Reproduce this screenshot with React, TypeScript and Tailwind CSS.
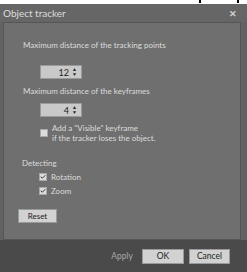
import { Check } from 'lucide-react';

function Spin({ value }: { value: string }) {
  return (
    <div className="ml-[36px] flex h-[14px] w-[42px] items-center justify-end border border-[#9a9a9a] bg-[#c9c9c9] pr-[4px] text-[#222]">
      <span className="text-[9px] leading-none">{value}</span>
      <span className="ml-[3px] flex flex-col items-center text-[5px] leading-[5px]">
        <span>▲</span>
        <span>▼</span>
      </span>
    </div>
  );
}

function Box({ checked }: { checked?: boolean }) {
  return (
    <span className="flex h-[8px] w-[8px] shrink-0 items-center justify-center border border-[#a8a8a8] bg-[#dcdcdc]">
      {checked && <Check className="h-[8px] w-[8px] text-[#333]" strokeWidth={4} />}
    </span>
  );
}

export default function App() {
  return (
    <div
      className="flex h-[272px] w-[247px] flex-col bg-[#626262] text-[#dcdcdc]"
      style={{ fontFamily: 'Lato, "Open Sans", sans-serif' }}
    >
      {/* strip left over from the window above */}
      <div className="flex h-[4px] bg-white">
        <span className="ml-[199px] h-[3px] w-[2px] bg-black" />
        <span className="ml-[36px] h-[3px] w-[2px] bg-black" />
      </div>

      {/* title bar */}
      <div className="flex h-[18px] items-center justify-between bg-[#666] pl-[3px] pr-[10px]">
        <span className="text-[10px] leading-none">Object tracker</span>
        <span className="text-[9px] font-bold leading-none text-[#d0d0d0]">✕</span>
      </div>

      {/* settings panel */}
      <div className="ml-[3px] mr-[6px] flex h-[218px] flex-col border border-[#555] bg-[#6f6f6f] text-[8px]">
        <div className="ml-[19px] mt-[16px] h-[12px] leading-[12px]">Maximum distance of the tracking points</div>
        <div className="mt-[14px]">
          <Spin value="12" />
        </div>

        <div className="ml-[19px] mt-[6px] h-[12px] leading-[12px]">Maximum distance of the keyframes</div>
        <div className="mt-[6px]">
          <Spin value="4" />
        </div>

        <div className="ml-[36px] mt-[6px] flex items-center gap-[4px]">
          <Box />
          <div className="leading-[10px]">
            <div>Add a "Visible" keyframe</div>
            <div>if the tracker loses the object.</div>
          </div>
        </div>

        <div className="ml-[18px] mt-[14px] h-[12px] leading-[12px]">Detecting</div>
        <div className="ml-[35px] mt-[2px] flex h-[12px] items-center gap-[4px]">
          <Box checked />
          <span>Rotation</span>
        </div>
        <div className="ml-[35px] mt-[2px] flex h-[12px] items-center gap-[4px]">
          <Box checked />
          <span>Zoom</span>
        </div>

        <button className="ml-[14px] mt-[12px] h-[14px] w-[39px] border border-[#9a9a9a] bg-[#d2d2d2] text-[8px] leading-none text-[#222]">
          Reset
        </button>
      </div>

      {/* footer */}
      <div className="flex flex-1 items-center justify-end bg-[#4a4a4a] pr-[17px] text-[8.5px]">
        <span className="mr-[9px] text-[#a8a8a8]">Apply</span>
        <button className="mr-[5px] h-[15px] w-[42px] border border-[#9a9a9a] bg-[#d2d2d2] leading-none text-[#222]">OK</button>
        <button className="h-[15px] w-[41px] border border-[#9a9a9a] bg-[#d2d2d2] leading-none text-[#222]">Cancel</button>
      </div>
    </div>
  );
}
